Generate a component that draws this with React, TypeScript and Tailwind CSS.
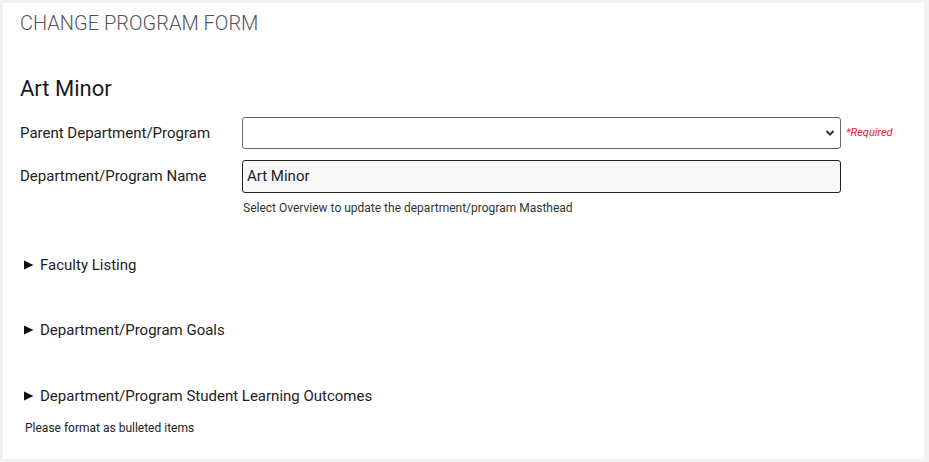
function Arrow() {
  return (
    <svg width="11" height="10" viewBox="0 0 11 10" className="shrink-0">
      <path d="M1 0.5L10.5 5L1 9.5Z" fill="#111" />
    </svg>
  );
}

export default function App() {
  return (
    <div className="w-[929px] h-[462px] bg-white border-[3px] border-r-[5px] border-[#f2f2f2] font-['Roboto',sans-serif] text-[#222]">
      <div className="pl-[17px] pt-[6px]">
        <h1 className="text-[20px] font-light text-[#57525c] leading-[28px]">
          CHANGE PROGRAM FORM
        </h1>

        <h2 className="mt-[38px] text-[22px] leading-[28px] text-[#1a1a1a]">Art Minor</h2>

        <div className="mt-[14px] flex items-center">
          <label className="w-[222px] text-[15px] text-[#222]">Parent Department/Program</label>
          <div className="relative w-[599px] h-[32px] border border-[#666] rounded-[3px] bg-white">
            <svg
              className="absolute right-[5px] top-[11px]"
              width="10"
              height="8"
              viewBox="0 0 10 8"
              fill="none"
              stroke="#333"
              strokeWidth="2"
            >
              <path d="M1.5 2l3.5 3.5L8.5 2" />
            </svg>
          </div>
          <span className="ml-[5px] text-[11px] italic text-[#e8202a]">*Required</span>
        </div>

        <div className="mt-[11px] flex items-center">
          <label className="w-[222px] text-[15px] text-[#222]">Department/Program Name</label>
          <div className="w-[599px] h-[33px] border-[1.5px] border-[#222] rounded-[3px] bg-[#f8f8f8] flex items-center pl-[4px] text-[15px] text-[#222]">
            Art Minor
          </div>
        </div>
        <p className="ml-[223px] mt-[6px] text-[12px] text-[#333]">
          Select Overview to update the department/program Masthead
        </p>

        <div className="mt-[37px] pl-[3px] text-[15px] text-[#222] flex items-center gap-[6px]">
          <Arrow />Faculty Listing
        </div>
        <div className="mt-[42px] pl-[3px] text-[15px] text-[#222] flex items-center gap-[6px]">
          <Arrow />Department/Program Goals
        </div>
        <div className="mt-[44px] pl-[3px] text-[15px] text-[#222] flex items-center gap-[6px]">
          <Arrow />Department/Program Student Learning Outcomes
        </div>
        <p className="mt-[11px] pl-[5px] text-[12px] text-[#222]">Please format as bulleted items</p>
      </div>
    </div>
  );
}
